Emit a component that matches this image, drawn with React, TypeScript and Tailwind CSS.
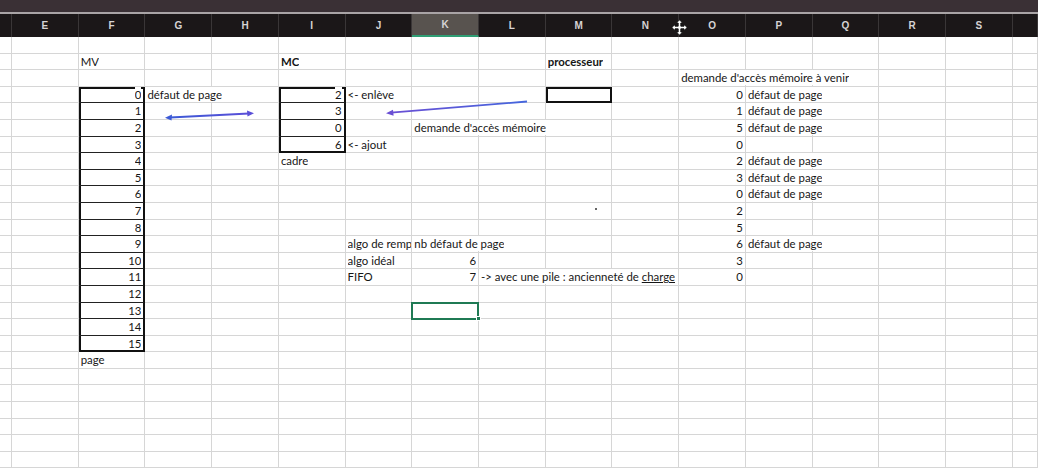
import type { ReactNode } from "react";

type Cell = {
  text: ReactNode;
  right?: boolean;
  bold?: boolean;
  // width in px the text may spill into the empty cells on its right
  spill?: number;
};

const COLS = ["", "E", "F", "G", "H", "I", "J", "K", "L", "M", "N", "O", "P", "Q", "R", "S", ""];
const ROW_COUNT = 26;

const grid = "grid grid-cols-[12px_repeat(15,66.73px)_1fr]";

// col index: 1=E 2=F 3=G 4=H 5=I 6=J 7=K 8=L 9=M 10=N 11=O 12=P
const cells: Record<string, Cell> = {
  "2-1": { text: "MV" },
  "5-1": { text: "MC", bold: true },
  "9-1": { text: "processeur", bold: true },
  "11-2": { text: "demande d'accès mémoire à venir", spill: 200 },
  "3-3": { text: "défaut de page", spill: 120 },
  "6-3": { text: "<- enlève" },
  "6-6": { text: "<- ajout" },
  "7-5": { text: "demande d'accès mémoire", spill: 200 },
  "5-7": { text: "cadre" },
  "6-12": { text: "algo de remplacement" },
  "7-12": { text: "nb défaut de page", spill: 120 },
  "6-13": { text: "algo idéal" },
  "7-13": { text: "6", right: true },
  "6-14": { text: "FIFO" },
  "7-14": { text: "7", right: true },
  "8-14": {
    text: (
      <>
        -&gt; avec une pile : ancienneté de <span className="underline">charge</span>
      </>
    ),
    spill: 196,
  },
  "2-19": { text: "page" },
};

// virtual memory pages 0..15
for (let i = 0; i < 16; i++) cells[`2-${i + 3}`] = { text: String(i), right: true };
// physical frames
[2, 3, 0, 6].forEach((v, i) => (cells[`5-${i + 3}`] = { text: String(v), right: true }));
// upcoming memory accesses
[0, 1, 5, 0, 2, 3, 0, 2, 5, 6, 3, 0].forEach(
  (v, i) => (cells[`11-${i + 3}`] = { text: String(v), right: true }),
);
[3, 4, 5, 7, 8, 9, 12].forEach((r) => (cells[`12-${r}`] = { text: "défaut de page", spill: 120 }));

function boxClass(col: number, row: number): string {
  // MV table, F3:F18
  if (col === 2 && row >= 3 && row <= 18) {
    const top = row === 3 ? "shadow-[inset_2px_2px_0_#111]" : "shadow-[inset_2px_0_0_#111]";
    const bottom = row === 18 ? "border-b-2 border-b-[#111]" : "border-b border-b-[#222]";
    return `${top} ${bottom} border-r-2 border-r-[#111]`;
  }
  // MC table, I3:I6
  if (col === 5 && row >= 3 && row <= 6) {
    const top = row === 3 ? "shadow-[inset_2px_2px_0_#111]" : "shadow-[inset_2px_0_0_#111]";
    const bottom = row === 6 ? "border-b-2 border-b-[#111]" : "border-b border-b-[#222]";
    return `${top} ${bottom} border-r-2 border-r-[#111]`;
  }
  // processor box
  if (col === 9 && row === 3) {
    return "shadow-[inset_2px_2px_0_#111] border-b-2 border-b-[#111] border-r-2 border-r-[#111]";
  }
  return "border-b border-b-[#d6d6d6] border-r border-r-[#d6d6d6]";
}

function SheetCell({ col, row }: { col: number; row: number }) {
  const cell = cells[`${col}-${row}`];
  const selected = col === 7 && row === 16;
  return (
    <div
      className={`relative h-[16.6px] min-w-0 ${boxClass(col, row)} ${
        cell?.right ? "flex justify-end pr-[2px]" : "pl-[2px]"
      }`}
    >
      {cell && (
        <span
          className={`relative z-10 inline-block overflow-hidden whitespace-nowrap bg-white align-top leading-[15px] text-[#161616] ${
            cell.bold ? "font-bold" : ""
          } ${cell.spill ? "" : "max-w-full"}`}
          style={cell.spill ? { maxWidth: cell.spill } : undefined}
        >
          {cell.text}
        </span>
      )}
      {col === 9 && row === 10 && (
        <span className="absolute left-[49px] top-[5px] h-[2px] w-[2px] rounded-full bg-[#333]" />
      )}
      {selected && (
        <>
          <span className="pointer-events-none absolute -left-[1px] -top-[1px] z-20 h-[18px] w-[68px] border-2 border-[#1f7a54]" />
          <span className="absolute -bottom-[3px] -right-[3px] z-30 h-[5px] w-[5px] border border-white bg-[#1f7a54]" />
        </>
      )}
    </div>
  );
}

function Arrows() {
  return (
    <svg className="pointer-events-none absolute left-0 top-0 z-40" width={1038} height={468}>
      <defs>
        <linearGradient id="ar1" x1="0" x2="1" y1="0" y2="0">
          <stop offset="0" stopColor="#3c5ad6" />
          <stop offset="1" stopColor="#5a4fd8" />
        </linearGradient>
        <linearGradient id="ar2" x1="0" x2="1" y1="0" y2="0">
          <stop offset="0" stopColor="#6a4fd4" />
          <stop offset="1" stopColor="#4466dd" />
        </linearGradient>
      </defs>
      <line x1={170} y1={117.5} x2={249} y2={113.5} stroke="url(#ar1)" strokeWidth={1.8} />
      <polygon points="165,117.8 172,114.6 171.5,120.6" fill="#3c5ad6" />
      <polygon points="254,113.2 247,110.4 247.5,116.4" fill="#5a4fd8" />
      <line x1={391} y1={112.7} x2={527} y2={101.5} stroke="url(#ar2)" strokeWidth={1.8} />
      <polygon points="386,113.2 393,109.8 393.6,115.8" fill="#6a4fd4" />
    </svg>
  );
}

function MoveCursor() {
  return (
    <svg className="absolute left-[671px] top-[19px] z-40" width={17} height={17} viewBox="0 0 17 17">
      <path
        d="M8.5 0.8 L11.6 4 H9.8 V7.2 H13 V5.4 L16.2 8.5 L13 11.6 V9.8 H9.8 V13 H11.6 L8.5 16.2 L5.4 13 H7.2 V9.8 H4 V11.6 L0.8 8.5 L4 5.4 V7.2 H7.2 V4 H5.4 Z"
        fill="#fff"
        stroke="#111"
        strokeWidth={0.9}
        strokeLinejoin="round"
      />
    </svg>
  );
}

export default function App() {
  return (
    <div className="relative h-[468px] w-[1038px] overflow-hidden bg-white font-['Lato','Open_Sans',sans-serif] text-[11.4px]">
      <div className="h-[12px] bg-[#3a3035]" />
      <div className="h-[2px] bg-[#a9a4a6]" />
      <div className={`${grid} h-[23px] bg-[#1b1718]`}>
        {COLS.map((c, i) => (
          <div
            key={i}
            className={`flex items-center justify-center border-r border-[#3a3637] font-['Liberation_Sans',sans-serif] text-[10px] font-bold text-[#d6d3d4] ${
              c === "K" ? "border-b-2 border-b-[#2f9e74] bg-[#58534f]" : ""
            }`}
          >
            {c}
          </div>
        ))}
      </div>
      {Array.from({ length: ROW_COUNT }, (_, r) => (
        <div key={r} className={grid}>
          {COLS.map((_, c) => (
            <SheetCell key={c} col={c} row={r} />
          ))}
        </div>
      ))}
      <Arrows />
      <MoveCursor />
    </div>
  );
}
